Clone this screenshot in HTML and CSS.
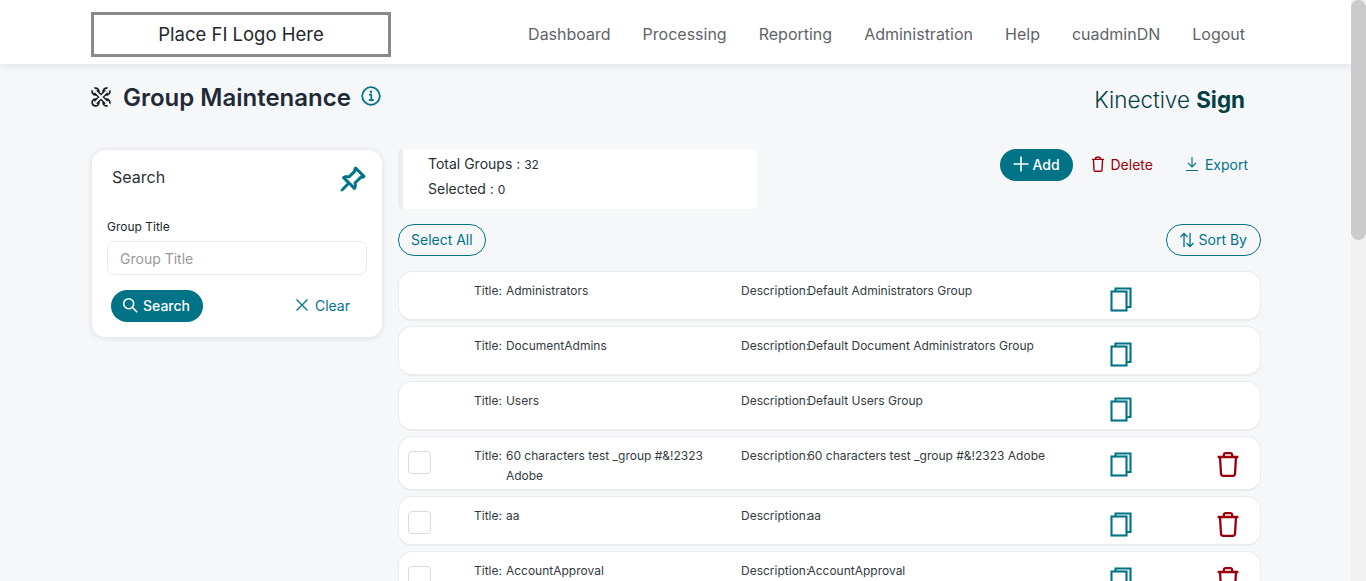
FILE: index.html
```html
<!DOCTYPE html>
<html lang="en">
<head>
<meta charset="utf-8">
<title>Group Maintenance</title>
<link rel="stylesheet" href="styles.css">
</head>
<body>
<svg class="sprite" aria-hidden="true">
  <symbol id="copy" viewBox="0 0 22 25"><path fill="none" stroke="#007387" stroke-width="2.100" d="M5.500 4.500V1.500h15v18.500h-3.500"/><rect fill="none" stroke="#007387" stroke-width="2.100" x="1.500" y="4.500" width="15" height="19"/></symbol>
  <symbol id="trash" viewBox="0 0 22 25"><path fill="none" stroke="#99000d" stroke-width="2.300" stroke-linejoin="round" d="M.6 5h20.800M6.800 4.800V3q0-1.900 2-1.900h4.400q2 0 2 1.900v1.800M3 5l1 16.800q.2 2.100 2.400 2.100h9.200q2.200 0 2.400-2.100L19 5"/></symbol>
</svg>
<div class="page">
<header class="topbar">
  <div class="topbar-inner">
    <div class="logo">Place FI Logo Here</div>
    <nav class="nav">
      <a>Dashboard</a><a>Processing</a><a>Reporting</a><a>Administration</a><a>Help</a><a>cuadminDN</a><a>Logout</a>
    </nav>
  </div>
</header>
<main class="wrap">
  <div class="titlebar">
    <div class="page-title">
      <svg class="tools-ico" viewBox="0 0 20 20" fill="none" stroke-linecap="butt">
        <g stroke="#15181c"><path d="M4.500 4.500 15.500 15.500M15.500 4.500 4.500 15.500" stroke-width="4.800"/><circle cx="4.500" cy="4.500" r="3.400" stroke-width="1.700"/><circle cx="15.500" cy="4.500" r="3.400" stroke-width="1.700"/><circle cx="4.500" cy="15.500" r="3.400" stroke-width="1.700"/><circle cx="15.500" cy="15.500" r="3.400" stroke-width="1.700"/></g>
        <g stroke="#f6f7f9"><path d="M4.500 4.500 15.500 15.500M15.500 4.500 4.500 15.500" stroke-width="2.200"/><path d="M0 0 4.500 4.500M20 0 15.500 4.500M20 20 15.500 15.500" stroke-width="3"/></g>
      </svg>
      <h1>Group Maintenance</h1>
      <svg class="info-ico" viewBox="0 0 20 20" fill="none" stroke="#007387"><circle cx="10" cy="10" r="8.800" stroke-width="1.800"/><path d="M8 8.600h2.300V14M7.800 14.200h5" stroke-width="1.700"/><circle cx="10" cy="5.800" r="1.200" fill="#007387" stroke="none"/></svg>
    </div>
    <div class="brand">Kinective <b>Sign</b></div>
  </div>
  <div class="columns">
    <aside class="search-card">
      <div class="search-head">
        <span>Search</span>
        <svg class="pin-ico" viewBox="0 0 16 16" fill="#007387" stroke="#007387" stroke-width=".75"><path d="M9.828.722a.5.5 0 0 1 .354.146l4.950 4.950a.5.5 0 0 1 0 .707c-.48.48-1.072.588-1.503.588-.177 0-.335-.018-.46-.039l-3.134 3.134a5.927 5.927 0 0 1 .16 1.013c.046.702-.032 1.687-.72 2.375a.5.5 0 0 1-.707 0l-2.829-2.828-3.182 3.182c-.195.195-1.219.902-1.414.707-.195-.195.512-1.220.707-1.414l3.182-3.182-2.828-2.829a.5.5 0 0 1 0-.707c.688-.688 1.673-.767 2.375-.72a5.922 5.922 0 0 1 1.013.16l3.134-3.133a2.772 2.772 0 0 1-.04-.461c0-.43.108-1.022.589-1.503a.5.5 0 0 1 .353-.146zm.122 2.112v-.002.002zm0-.002v.002a.5.5 0 0 1-.122.510L6.293 6.878a.5.5 0 0 1-.511.120H5.780l-.014-.004a4.507 4.507 0 0 0-.288-.076 4.922 4.922 0 0 0-.765-.116c-.422-.028-.836.008-1.175.150l5.510 5.509c.141-.34.177-.753.149-1.175a4.924 4.924 0 0 0-.192-1.054l-.004-.013v-.001a.5.5 0 0 1 .120-.512l3.536-3.535a.5.5 0 0 1 .532-.115l.096.022c.087.017.208.034.344.034.114 0 .23-.011.343-.04L9.927 2.028c-.029.113-.04.23-.04.343a1.779 1.779 0 0 0 .062.460z"/></svg>
      </div>
      <label class="field-label">Group Title</label>
      <input class="field-input" placeholder="Group Title">
      <div class="search-actions">
        <button class="btn-solid btn-search">
          <svg class="ico16" viewBox="0 0 16 16" fill="none" stroke="#fff" stroke-width="1.600" stroke-linecap="round"><circle cx="6.700" cy="6.700" r="5"/><path d="m10.500 10.500 4.300 4.300"/></svg>
          Search</button>
        <button class="btn-link btn-clear">
          <svg class="ico16" viewBox="0 0 16 16" fill="none" stroke="#007387" stroke-width="1.300"><path d="m2.500 2.500 11 11M13.500 2.500l-11 11"/></svg>
          Clear</button>
      </div>
    </aside>
    <section class="content">
      <div class="toolbar">
        <div class="stats">
          <div>Total Groups : <small>32</small></div>
          <div>Selected : <small>0</small></div>
        </div>
        <div class="actions">
          <button class="btn-solid btn-add">
            <svg class="ico18" viewBox="0 0 18 18" fill="none" stroke="#fff" stroke-width="1.600"><path d="M9 1.500v15M1.500 9h15"/></svg>
            Add</button>
          <button class="btn-link btn-delete">
            <svg class="ico16" viewBox="0 0 16 16" fill="none" stroke="#99000d" stroke-width="1.400" stroke-linejoin="round"><path d="M2 3.400h12M5.600 3.200V2.200q0-1 1-1h2.800q1 0 1 1v1M3.400 3.400l.6 10.600q.1 1.200 1.200 1.200h5.600q1.100 0 1.200-1.200l.6-10.600"/></svg>
            Delete</button>
          <button class="btn-link btn-export">
            <svg class="ico16" viewBox="0 0 16 16" fill="none" stroke="#007387" stroke-width="1.100"><path d="M8 1v9.500M4 7l4 4 4-4M2 14.500h12"/></svg>
            Export</button>
        </div>
      </div>
      <div class="listbar">
        <button class="btn-outline">Select All</button>
        <button class="btn-outline btn-sort">
          <svg class="ico16" viewBox="0 0 16 16" fill="none" stroke="#007387" stroke-width="1.300"><path d="M5 15V1.500M1.500 5 5 1.500 8.500 5M11 1v13.500M7.500 11l3.500 3.500 3.500-3.500"/></svg>
          Sort By</button>
      </div>
      <div class="list">
        <article class="row">
          <span class="cell-check"></span>
          <div class="cell-title"><span>Title:</span><span>Administrators</span></div>
          <div class="cell-desc"><span class="desc-key">Description:</span>Default Administrators Group</div>
          <svg class="row-ico"><use href="#copy"/></svg>
        </article>
        <article class="row">
          <span class="cell-check"></span>
          <div class="cell-title"><span>Title:</span><span>DocumentAdmins</span></div>
          <div class="cell-desc"><span class="desc-key">Description:</span>Default Document Administrators Group</div>
          <svg class="row-ico"><use href="#copy"/></svg>
        </article>
        <article class="row">
          <span class="cell-check"></span>
          <div class="cell-title"><span>Title:</span><span>Users</span></div>
          <div class="cell-desc"><span class="desc-key">Description:</span>Default Users Group</div>
          <svg class="row-ico"><use href="#copy"/></svg>
        </article>
        <article class="row">
          <span class="cell-check"><i class="box"></i></span>
          <div class="cell-title"><span>Title:</span><span>60 characters test _group #&amp;!2323 Adobe</span></div>
          <div class="cell-desc"><span class="desc-key">Description:</span>60 characters test _group #&amp;!2323 Adobe</div>
          <svg class="row-ico"><use href="#copy"/></svg>
          <svg class="row-ico"><use href="#trash"/></svg>
        </article>
        <article class="row">
          <span class="cell-check"><i class="box"></i></span>
          <div class="cell-title"><span>Title:</span><span>aa</span></div>
          <div class="cell-desc"><span class="desc-key">Description:</span>aa</div>
          <svg class="row-ico"><use href="#copy"/></svg>
          <svg class="row-ico"><use href="#trash"/></svg>
        </article>
        <article class="row">
          <span class="cell-check"><i class="box"></i></span>
          <div class="cell-title"><span>Title:</span><span>AccountApproval</span></div>
          <div class="cell-desc"><span class="desc-key">Description:</span>AccountApproval</div>
          <svg class="row-ico"><use href="#copy"/></svg>
          <svg class="row-ico"><use href="#trash"/></svg>
        </article>
      </div>
    </section>
  </div>
</main>
</div>
<div class="scrollbar"><div class="scrollbar-thumb"></div></div>
</body>
</html>
```
FILE: styles.css
```css
* { box-sizing: border-box; }
html, body { height: 100%; overflow: hidden; }
body { margin: 0; display: flex; background: #f6f7f9; font-family: Inter, "Liberation Sans", sans-serif; color: #212529; }
.sprite { display: none; }
.page { flex: 1; min-width: 0; height: 100%; overflow: hidden; }
.scrollbar { flex: none; width: 15px; height: 100%; background: #f1f1f1; }
.scrollbar-thumb { height: 240px; background: #cbcbcb; border-radius: 8px; }
button { font: inherit; border: 0; background: none; padding: 0; display: inline-flex; align-items: center; }
.wrap { padding: 0 90px 0 91px; }
.topbar { height: 64px; background: #fff; box-shadow: 0 2px 8px rgba(30,50,80,.1); }
.topbar-inner { height: 64px; display: flex; align-items: center; justify-content: space-between; padding: 4px 106px 0 91px; }
.logo { width: 300px; height: 45px; border: 3px solid #8a8a8a; display: flex; align-items: center; justify-content: center; font-size: 18.500px; color: #26262b; }
.nav { display: flex; gap: 32px; font-size: 16px; color: #5f6368; }
.titlebar { display: flex; justify-content: space-between; padding: 20px 16px 0 0; height: 85px; }
.page-title { display: flex; align-items: flex-start; }
.page-title h1 { margin: 0; font-size: 24px; line-height: 28px; font-weight: 600; color: #212936; }
.tools-ico { width: 20px; height: 20px; margin: 3px 12px 0 0; }
.info-ico { width: 20px; height: 20px; margin: 2px 0 0 10px; }
.brand { font-size: 22.400px; line-height: 32px; font-weight: 300; color: #043f45; }
.brand b { font-weight: 700; }
.columns { display: flex; gap: 15px; align-items: flex-start; }
.search-card { width: 292px; height: 189px; flex: none; background: #fff; border: 1px solid #ececef; border-radius: 14px; box-shadow: 0 1px 5px rgba(30,50,80,.1); padding: 0 15px; }
.search-head { display: flex; justify-content: space-between; align-items: flex-start; padding: 17px 1px 0 5px; height: 60px; font-size: 16px; line-height: 20px; color: #2b2f36; }
.pin-ico { width: 27px; height: 27px; margin-top: -1px; }
.field-label { display: block; margin-top: 9px; font-size: 12px; line-height: 16px; color: #212529; }
.field-input { display: block; width: 260px; height: 34px; margin-top: 6px; border: 1px solid #e9eaec; border-radius: 7px; padding: 0 12px; font: 14px Inter, sans-serif; color: #212529; }
.field-input::placeholder { color: #9a9a9a; }
.search-actions { display: flex; justify-content: space-between; margin-top: 15px; padding: 0 17px 0 4px; }
.btn-solid { background: #007387; color: #fff; border-radius: 16px; height: 32px; padding-bottom: 2px; font-size: 14px; font-weight: 500; }
.btn-search { width: 92px; padding-left: 11px; gap: 5px; }
.btn-link { height: 32px; padding-bottom: 2px; font-size: 14px; }
.btn-clear { color: #007387; gap: 5px; }
.ico16 { width: 16px; height: 16px; flex: none; }
.ico18 { width: 18px; height: 18px; flex: none; }
.content { flex: 1; min-width: 0; }
.toolbar { display: flex; justify-content: space-between; align-items: flex-start; }
.stats { width: 359px; height: 60px; background: #fff; border-left: 5px solid #ececec; border-radius: 5px; padding: 2px 0 0 25px; font-size: 14px; line-height: 25px; color: #2b2f36; }
.stats small { font-size: 12px; line-height: 1; }
.actions { display: flex; align-items: center; padding-right: 13px; }
.btn-add { width: 73px; padding-left: 12px; gap: 2px; }
.btn-delete { color: #99000d; gap: 4px; margin-left: 17px; }
.btn-export { color: #007387; gap: 5px; margin-left: 31px; }
.listbar { display: flex; justify-content: space-between; margin-top: 15px; }
.btn-outline { height: 32px; padding: 0 12px 1px; border: 1px solid #007387; border-radius: 16px; font-size: 14px; color: #007387; gap: 4px; }
.btn-sort { padding-right: 13px; }
.list { margin-top: 15px; display: flex; flex-direction: column; gap: 5px; }
.row { display: grid; grid-template-columns: 75px 266px 370px 107px 1fr; align-items: start; min-height: 50px; padding: 9px 0 3px; background: #fff; border: 1px solid #eaebee; border-bottom-width: 2px; border-radius: 14px; font-size: 12px; line-height: 20px; color: #343a40; }
.cell-check { padding-left: 9px; }
.box { display: block; width: 23px; height: 23px; margin-top: 5px; background: #fff; border: 1px solid #d9dadf; border-radius: 4px; }
.cell-title { display: flex; gap: 4px; padding-right: 30px; }
.cell-title span:first-child { flex: none; }
.cell-desc { padding-left: 1px; }
.desc-key { margin-right: -2px; }
.row-ico { width: 22px; height: 25px; margin-top: 6px; }
```
